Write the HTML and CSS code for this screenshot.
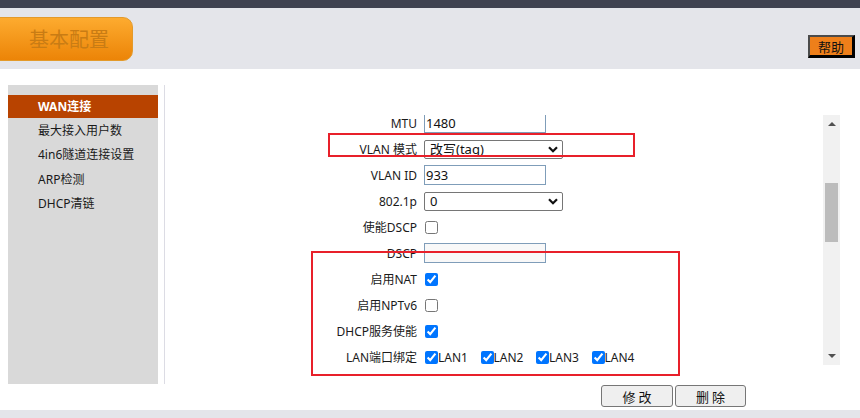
FILE: index.html
```html
<!DOCTYPE html>
<html lang="zh-CN">
<head>
<meta charset="utf-8">
<title>基本配置</title>
<link rel="stylesheet" href="styles.css">
</head>
<body>
<div class="page">
  <div class="topbar"></div>
  <div class="header">
    <div class="tab">基本配置</div>
    <button class="help">帮助</button>
  </div>
  <div class="main">
    <ul class="sidebar">
      <li class="item active">WAN连接</li>
      <li class="item">最大接入用户数</li>
      <li class="item">4in6隧道连接设置</li>
      <li class="item">ARP检测</li>
      <li class="item">DHCP清链</li>
    </ul>
    <div class="divider"></div>
    <div class="content">
      <div class="scrollbox">
        <div class="form">
          <label class="lbl">MTU</label>
          <div class="ctl"><input class="txt" type="text" value="1480"></div>

          <label class="lbl">VLAN 模式</label>
          <div class="ctl"><span class="selwrap"><select class="sel"><option>改写(tag)</option></select><svg class="chev" width="10" height="7" viewBox="0 0 10 7"><path d="M1 1.2 L5 5.2 L9 1.2" fill="none" stroke="#111" stroke-width="2.2"/></svg></span></div>

          <label class="lbl">VLAN ID</label>
          <div class="ctl"><input class="txt" type="text" value="933"></div>

          <label class="lbl">802.1p</label>
          <div class="ctl"><span class="selwrap"><select class="sel"><option>0</option></select><svg class="chev" width="10" height="7" viewBox="0 0 10 7"><path d="M1 1.2 L5 5.2 L9 1.2" fill="none" stroke="#111" stroke-width="2.2"/></svg></span></div>

          <label class="lbl">使能DSCP</label>
          <div class="ctl"><input class="cb" type="checkbox"></div>

          <label class="lbl">DSCP</label>
          <div class="ctl"><input class="txt off" type="text" value=""></div>

          <label class="lbl">启用NAT</label>
          <div class="ctl"><input class="cb" type="checkbox" checked></div>

          <label class="lbl">启用NPTv6</label>
          <div class="ctl"><input class="cb" type="checkbox"></div>

          <label class="lbl">DHCP服务使能</label>
          <div class="ctl"><input class="cb" type="checkbox" checked></div>

          <label class="lbl">LAN端口绑定</label>
          <div class="ctl lans">
            <span class="lan"><input class="cb" type="checkbox" checked>LAN1</span>
            <span class="lan"><input class="cb" type="checkbox" checked>LAN2</span>
            <span class="lan"><input class="cb" type="checkbox" checked>LAN3</span>
            <span class="lan"><input class="cb" type="checkbox" checked>LAN4</span>
          </div>
        </div>
        <div class="scrollbar">
          <div class="arrow up"></div>
          <div class="track"><div class="thumb"></div></div>
          <div class="arrow down"></div>
        </div>
      </div>
      <div class="actions">
        <button class="btn">修 改</button>
        <button class="btn">删 除</button>
      </div>
    </div>
  </div>
  <div class="footer"></div>
  <div class="mark mark1"></div>
  <div class="mark mark2"></div>
</div>
</body>
</html>
```
FILE: styles.css
```css
* { box-sizing: border-box; }
html, body { margin: 0; padding: 0; }
body {
  width: 860px;
  height: 418px;
  overflow: hidden;
  background: #ffffff;
  font-family: "Noto Sans", "Noto Sans CJK SC", sans-serif;
  font-size: 12px;
  color: #1a1a1a;
}
.page { position: relative; width: 860px; height: 418px; }

.topbar { height: 8px; background: #3f4250; }

.header {
  height: 61px;
  background: #e4e5ea;
  display: flex;
  align-items: flex-start;
}
.tab {
  margin-top: 9px;
  margin-left: -12px;
  width: 145px;
  height: 44px;
  border-radius: 10px;
  border: 1px solid #e39a2a;
  background: linear-gradient(#fdab2f, #ec8407);
  color: #c97c14;
  font-family: "Noto Sans CJK SC", sans-serif;
  font-size: 20px;
  line-height: 41px;
  padding-left: 40px;
  letter-spacing: 0;
}
.help {
  margin-left: auto;
  margin-right: 5px;
  margin-top: 27px;
  width: 47px;
  height: 23px;
  padding: 0;
  background: #ee7f1a;
  border-style: solid;
  border-width: 2px 3px 3px 2px;
  border-color: #4b4b4b #000 #000 #4b4b4b;
  font-family: "Noto Sans CJK SC", sans-serif;
  font-size: 13px;
  line-height: 17px;
  color: #111;
}

.main {
  height: 341px;
  display: flex;
  padding-top: 16px;
  padding-left: 8px;
}
.sidebar {
  list-style: none;
  margin: 0;
  padding: 10px 0 0 0;
  width: 150px;
  height: 299px;
  background: #d9d9d9;
}
.item {
  height: 24.4px;
  line-height: 24.4px;
  padding-left: 30px;
  color: #1a1a1a;
  white-space: nowrap;
}
.item.active {
  height: 23px;
  line-height: 23px;
  margin-bottom: 1px;
  background: #b84300;
  color: #fff;
  font-weight: bold;
}
.divider {
  margin-left: 6px;
  width: 1px;
  height: 299px;
  background: #dcdce4;
}

.content {
  display: flex;
  flex-direction: column;
  width: 675px;
}
.scrollbox {
  margin-top: 30px;
  height: 250px;
  display: flex;
  overflow: hidden;
}
.form {
  flex: 1;
  margin-top: -5px;
  display: grid;
  grid-template-columns: 252px 1fr;
  grid-auto-rows: 26px;
  column-gap: 7px;
  align-content: start;
}
.lbl {
  text-align: right;
  display: flex;
  align-items: center;
  justify-content: flex-end;
  white-space: nowrap;
  color: #1a1a1a;
}
.ctl { display: flex; align-items: center; }
.txt {
  width: 122px;
  height: 20px;
  border: 1px solid #7f9db9;
  padding: 0 1px;
  margin: 0;
  font-family: "Noto Sans", "Noto Sans CJK SC", sans-serif;
  font-size: 13px;
  color: #111;
  background: #fff;
  outline: none;
}
.txt.off { background: #f8f8f8; }
.selwrap { position: relative; display: inline-block; }
.sel {
  -webkit-appearance: none;
  appearance: none;
  width: 139px;
  height: 19px;
  border: 1px solid #767676;
  border-radius: 2px;
  background: #fff;
  padding: 0 0 0 5px;
  margin: 0;
  font-family: "Noto Sans", "Noto Sans CJK SC", sans-serif;
  font-size: 13px;
  line-height: 17px;
  color: #111;
  display: block;
}
.chev { position: absolute; right: 5px; top: 6px; }
.cb {
  width: 13px;
  height: 13px;
  margin: 0 0 0 1px;
  accent-color: #0075ff;
}
.lans { gap: 0; }
.lan {
  display: inline-flex;
  align-items: center;
  width: 55.5px;
  font-size: 12px;
}
.lan .cb { margin-right: 0; }

.scrollbar {
  width: 17px;
  height: 250px;
  background: #f1f1f1;
  display: flex;
  flex-direction: column;
  align-items: center;
  margin-right: 0;
}
.arrow { width: 0; height: 0; border-left: 4px solid transparent; border-right: 4px solid transparent; }
.arrow.up { margin-top: 7px; border-bottom: 4px solid #505050; }
.arrow.down { margin-bottom: 7px; border-top: 4px solid #505050; }
.track { flex: 1; width: 100%; padding: 0 2px; }
.thumb { margin-top: 57px; height: 59px; background: #bcbcbc; }

.actions {
  display: flex;
  gap: 2px;
  padding-left: 436px;
  margin-top: 20px;
}
.btn {
  width: 72px;
  height: 22px;
  padding: 0;
  border: 1px solid #767676;
  border-radius: 3px;
  background: #efefef;
  font-family: "Noto Sans CJK SC", sans-serif;
  font-size: 13px;
  color: #111;
}
.btn + .btn { width: 71px; }

.footer { height: 8px; background: #e4e5ea; }

.mark { position: absolute; border: 2px solid #e8202a; }
.mark1 { left: 328px; top: 133px; width: 307px; height: 24px; }
.mark2 { left: 311px; top: 251px; width: 369px; height: 125px; }
```
